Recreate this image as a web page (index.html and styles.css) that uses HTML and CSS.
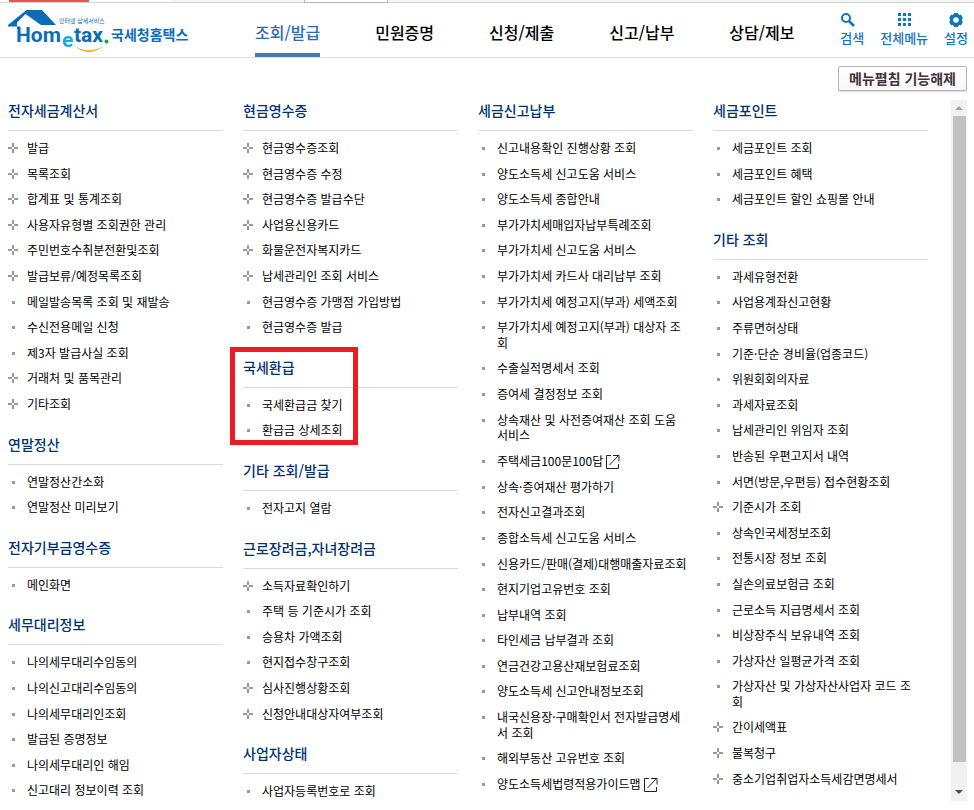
FILE: index.html
```html
<!DOCTYPE html>
<html lang="ko">
<head>
<meta charset="utf-8">
<title>국세청 홈택스</title>
<link rel="stylesheet" href="styles.css">
</head>
<body>
<div class="strip"><span class="strip-red"></span><span class="strip-gray"></span><span class="strip-tab"></span><span class="strip-rest"></span></div>
<header class="header">
  <a class="logo" href="#" aria-label="국세청홈택스">
    <svg width="182" height="46" viewBox="0 0 182 46">
      <path d="M19.500 3H35L49 18H34L18.500 7L10 15.500V22H13V19.500H1V18Z" fill="#0b6db7"/>
      <text class="lg-tag" x="52" y="16">인터넷 납세서비스</text>
      <text class="lg-main" x="9" y="35">Hom<tspan class="lg-e" x="55" y="40">e</tspan><tspan x="67" y="35">tax</tspan></text>
      <circle cx="99.500" cy="34.500" r="2" fill="#16a04a"/>
      <path d="M67 38.500Q82 48 97 38.500Q82 51.500 67 38.500Z" fill="#f5a623"/>
      <text class="lg-ko" x="104" y="33">국세청홈택스</text>
    </svg>
  </a>
  <nav class="nav">
    <a class="on" href="#">조회/발급</a>
    <a href="#">민원증명</a>
    <a href="#">신청/제출</a>
    <a href="#">신고/납부</a>
    <a href="#">상담/제보</a>
  </nav>
  <div class="tools">
    <a class="search" href="#"><svg width="16" height="16" viewBox="0 0 16 16"><circle cx="6" cy="6" r="4" fill="none" stroke="#0f75bc" stroke-width="2"/><path d="M9 9l5 5" stroke="#0f75bc" stroke-width="2.500"/></svg>검색</a>
    <a href="#"><svg width="16" height="16" viewBox="0 0 16 16"><path d="M2 1h3v3h-3zM7 1h3v3h-3zM12 1h3v3h-3zM2 6h3v3h-3zM7 6h3v3h-3zM12 6h3v3h-3zM2 11h3v3h-3zM7 11h3v3h-3zM12 11h3v3h-3z" fill="#0f75bc"/></svg>전체메뉴</a>
    <a href="#"><svg width="16" height="16" viewBox="0 0 16 16"><circle cx="8" cy="8" r="4.500" fill="none" stroke="#0f75bc" stroke-width="3.400"/><path d="M6 1h4l.5 2h-5zM6 15h4l.5-2h-5zM1.100 6l2-3.400 2 1.200-2.400 4zM14.900 6l-2-3.400-2 1.200 2.400 4zM1.100 10l2 3.400 2-1.200-2.400-4zM14.900 10l-2 3.400-2-1.200 2.400-4z" fill="#0f75bc"/></svg>설정</a>
  </div>
</header>
<div class="bar"><button class="toggle" type="button">메뉴펼침 기능해제</button></div>
<main class="panel">
  <div class="cols">
    <div class="col">
      <section><h2>전자세금계산서</h2><ul>
        <li class="more"><a href="#">발급</a></li>
        <li class="more"><a href="#">목록조회</a></li>
        <li class="more"><a href="#">합계표 및 통계조회</a></li>
        <li class="more"><a href="#">사용자유형별 조회권한 관리</a></li>
        <li class="more"><a href="#">주민번호수취분전환및조회</a></li>
        <li class="more"><a href="#">발급보류/예정목록조회</a></li>
        <li><a href="#">메일발송목록 조회 및 재발송</a></li>
        <li><a href="#">수신전용메일 신청</a></li>
        <li><a href="#">제3자 발급사실 조회</a></li>
        <li class="more"><a href="#">거래처 및 품목관리</a></li>
        <li class="more"><a href="#">기타조회</a></li>
      </ul></section>
      <section><h2>연말정산</h2><ul>
        <li><a href="#">연말정산간소화</a></li>
        <li><a href="#">연말정산 미리보기</a></li>
      </ul></section>
      <section><h2>전자기부금영수증</h2><ul>
        <li><a href="#">메인화면</a></li>
      </ul></section>
      <section><h2>세무대리정보</h2><ul>
        <li><a href="#">나의세무대리수임동의</a></li>
        <li><a href="#">나의신고대리수임동의</a></li>
        <li><a href="#">나의세무대리인조회</a></li>
        <li><a href="#">발급된 증명정보</a></li>
        <li><a href="#">나의세무대리인 해임</a></li>
        <li><a href="#">신고대리 정보이력 조회</a></li>
      </ul></section>
    </div>
    <div class="col">
      <section><h2>현금영수증</h2><ul>
        <li class="more"><a href="#">현금영수증조회</a></li>
        <li class="more"><a href="#">현금영수증 수정</a></li>
        <li class="more"><a href="#">현금영수증 발급수단</a></li>
        <li class="more"><a href="#">사업용신용카드</a></li>
        <li class="more"><a href="#">화물운전자복지카드</a></li>
        <li class="more"><a href="#">납세관리인 조회 서비스</a></li>
        <li><a href="#">현금영수증 가맹점 가입방법</a></li>
        <li><a href="#">현금영수증 발급</a></li>
      </ul></section>
      <section class="marked"><h2>국세환급</h2><ul>
        <li><a href="#">국세환급금 찾기</a></li>
        <li><a href="#">환급금 상세조회</a></li>
      </ul></section>
      <section><h2>기타 조회/발급</h2><ul>
        <li><a href="#">전자고지 열람</a></li>
      </ul></section>
      <section><h2>근로장려금,자녀장려금</h2><ul>
        <li class="more"><a href="#">소득자료확인하기</a></li>
        <li><a href="#">주택 등 기준시가 조회</a></li>
        <li><a href="#">승용차 가액조회</a></li>
        <li><a href="#">현지접수창구조회</a></li>
        <li class="more"><a href="#">심사진행상황조회</a></li>
        <li class="more"><a href="#">신청안내대상자여부조회</a></li>
      </ul></section>
      <section><h2>사업자상태</h2><ul>
        <li><a href="#">사업자등록번호로 조회</a></li>
      </ul></section>
    </div>
    <div class="col">
      <section><h2>세금신고납부</h2><ul>
        <li><a href="#">신고내용확인 진행상황 조회</a></li>
        <li><a href="#">양도소득세 신고도움 서비스</a></li>
        <li><a href="#">양도소득세 종합안내</a></li>
        <li><a href="#">부가가치세매입자납부특례조회</a></li>
        <li><a href="#">부가가치세 신고도움 서비스</a></li>
        <li><a href="#">부가가치세 카드사 대리납부 조회</a></li>
        <li><a href="#">부가가치세 예정고지(부과) 세액조회</a></li>
        <li><a href="#">부가가치세 예정고지(부과) 대상자 조<br>회</a></li>
        <li><a href="#">수출실적명세서 조회</a></li>
        <li><a href="#">증여세 결정정보 조회</a></li>
        <li><a href="#">상속재산 및 사전증여재산 조회 도움<br>서비스</a></li>
        <li><a href="#">주택세금100문100답<svg class="ext" width="14" height="14" viewBox="0 0 14 14"><path d="M5 .5H.5v13h12V9M3.500 10L12 1M7 .5h6v6" fill="none" stroke="#222"/></svg></a></li>
        <li><a href="#">상속·증여재산 평가하기</a></li>
        <li><a href="#">전자신고결과조회</a></li>
        <li><a href="#">종합소득세 신고도움 서비스</a></li>
        <li><a href="#">신용카드/판매(결제)대행매출자료조회</a></li>
        <li><a href="#">현지기업고유번호 조회</a></li>
        <li><a href="#">납부내역 조회</a></li>
        <li><a href="#">타인세금 납부결과 조회</a></li>
        <li><a href="#">연금건강고용산재보험료조회</a></li>
        <li><a href="#">양도소득세 신고안내정보조회</a></li>
        <li><a href="#">내국신용장·구매확인서 전자발급명세<br>서 조회</a></li>
        <li><a href="#">해외부동산 고유번호 조회</a></li>
        <li><a href="#">양도소득세법령적용가이드맵<svg class="ext" width="14" height="14" viewBox="0 0 14 14"><path d="M5 .5H.5v13h12V9M3.500 10L12 1M7 .5h6v6" fill="none" stroke="#222"/></svg></a></li>
      </ul></section>
    </div>
    <div class="col">
      <section><h2>세금포인트</h2><ul>
        <li><a href="#">세금포인트 조회</a></li>
        <li><a href="#">세금포인트 혜택</a></li>
        <li><a href="#">세금포인트 할인 쇼핑몰 안내</a></li>
      </ul></section>
      <section><h2>기타 조회</h2><ul>
        <li><a href="#">과세유형전환</a></li>
        <li><a href="#">사업용계좌신고현황</a></li>
        <li><a href="#">주류면허상태</a></li>
        <li><a href="#">기준·단순 경비율(업종코드)</a></li>
        <li><a href="#">위원회회의자료</a></li>
        <li><a href="#">과세자료조회</a></li>
        <li><a href="#">납세관리인 위임자 조회</a></li>
        <li><a href="#">반송된 우편고지서 내역</a></li>
        <li><a href="#">서면(방문,우편등) 접수현황조회</a></li>
        <li class="more"><a href="#">기준시가 조회</a></li>
        <li><a href="#">상속인국세정보조회</a></li>
        <li><a href="#">전통시장 정보 조회</a></li>
        <li><a href="#">실손의료보험금 조회</a></li>
        <li><a href="#">근로소득 지급명세서 조회</a></li>
        <li><a href="#">비상장주식 보유내역 조회</a></li>
        <li><a href="#">가상자산 일평균가격 조회</a></li>
        <li><a href="#">가상자산 및 가상자산사업자 코드 조<br>회</a></li>
        <li class="more"><a href="#">간이세액표</a></li>
        <li class="more"><a href="#">불복청구</a></li>
        <li class="more"><a href="#">중소기업취업자소득세감면명세서</a></li>
      </ul></section>
    </div>
  </div>
  <div class="scroll" aria-hidden="true"><span class="up"></span><span class="thumb"></span><span class="down"></span></div>
</main>
</body>
</html>
```
FILE: styles.css
```css
*, *::before, *::after { box-sizing: border-box; }
body {
  margin: 0;
  height: 100vh;
  display: flex;
  flex-direction: column;
  overflow: hidden;
  background: #fff;
  color: #000;
  font: 12px/1.3 "Noto Sans CJK KR", sans-serif;
}
a { color: inherit; text-decoration: none; }
ul { list-style: none; margin: 0; padding: 4px 0 0; }

.strip { display: flex; flex: none; height: 3px; border-bottom: 1px solid #d3d3d3; }
.strip-red { width: 80px; margin-left: 9px; background: #ef5350; }
.strip-gray { width: 132px; margin-left: 83px; background: #f5f5f5; }
.strip-tab { width: 84px; height: 3px; border: 1px solid #b5b5b5; border-top: 0; background: #fff; }
.strip-rest { flex: 1; background: #f5f5f5; }

.header {
  flex: none;
  display: flex;
  height: 55px;
  padding: 0 6px 0 7px;
  border-bottom: 1px solid #e2e2e2;
}
.logo { flex: none; width: 182px; height: 50px; padding-top: 4px; }
.lg-tag { font-size: 6px; fill: #0b6db7; }
.lg-main { font: bold 21px Roboto, sans-serif; fill: #0b6db7; }
.lg-e { fill: #17a9e0; }
.lg-ko { font-size: 14px; font-weight: bold; fill: #0b6db7; }

.nav { display: flex; gap: 55px; margin-left: 66px; font-size: 16px; font-weight: 500; line-height: 20px; }
.nav a { padding-top: 19px; height: 54px; white-space: nowrap; }
.nav .on { color: #2a6cb3; border-bottom: 4px solid #4577b8; }

.tools { display: flex; gap: 16px; margin-left: auto; color: #0f75bc; font-size: 13px; font-weight: 500; line-height: 20px; white-space: nowrap; }
.tools a { display: flex; flex-direction: column; align-items: center; padding-top: 9px; }
.tools .search { align-items: flex-start; }

.bar { flex: none; display: flex; justify-content: flex-end; padding: 8px 7px 0 0; height: 42px; }
.toggle {
  width: 129px;
  height: 25px;
  padding: 0 0 2px;
  border: 1px solid #b4b4b4;
  border-radius: 2px;
  background: linear-gradient(#fff, #f7f7f7);
  box-shadow: 0 1px 1px #ddd;
  color: #40333a;
  font: bold 14px "Noto Sans CJK KR", sans-serif;
  line-height: 20px;
}

.panel { flex: 1; min-height: 0; display: flex; margin: 0 7px 9px 8px; overflow: hidden; }
.cols { flex: 1; display: grid; grid-template-columns: repeat(4, 1fr); gap: 20px; align-items: start; padding-right: 23px; }
section { margin-bottom: 17px; }
h2 {
  margin: 0;
  padding-bottom: 10px;
  border-bottom: 1px solid #d9d9d9;
  color: #003270;
  font-size: 14px;
  font-weight: 500;
  line-height: 20px;
}
li { position: relative; padding: 5px 0 5px 19px; white-space: nowrap; }
li::before {
  content: "";
  position: absolute;
  left: 4px;
  top: 12px;
  width: 3px;
  height: 3px;
  background: #999;
}
.more::before {
  left: 0;
  top: 8px;
  width: 10px;
  height: 10px;
  background:
    linear-gradient(#999, #999) 4px 0 / 2px 4px no-repeat,
    linear-gradient(#999, #999) 4px 6px / 2px 4px no-repeat,
    linear-gradient(#999, #999) 0 4px / 4px 2px no-repeat,
    linear-gradient(#999, #999) 6px 4px / 4px 2px no-repeat;
}
.ext { margin-left: 3px; vertical-align: -3px; }

.marked { position: relative; }
.marked::after {
  content: "";
  position: absolute;
  left: -13px;
  top: -10px;
  bottom: -2px;
  width: 128px;
  border: 5px solid #ed1c24;
}

.scroll { flex: none; display: flex; flex-direction: column; align-items: center; width: 16px; background: #f1f1f1; }
.up, .down { border: 4px solid transparent; }
.up { margin: 2px 0 6px; border-bottom-color: #a3a3a3; }
.down { margin: 10px 0 3px; border-top-color: #505050; }
.thumb { flex: 1; width: 13px; margin-bottom: 18px; background: #c1c1c1; }
```
